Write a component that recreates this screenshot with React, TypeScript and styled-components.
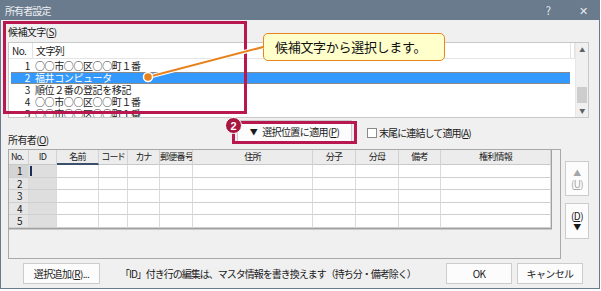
import styled, { createGlobalStyle } from 'styled-components';

const GlobalStyle = createGlobalStyle`
  html, body {
    margin: 0;
    padding: 0;
    background: #ffffff;
  }
  body {
    font-family: "Noto Sans CJK JP", "Noto Sans", sans-serif;
    font-size: 10px;
    letter-spacing: -0.6px;
    color: #1a1a1a;
  }
`;

const Window = styled.div`
  position: relative;
  width: 600px;
  height: 289px;
  box-sizing: border-box;
  background: #f0f0f0;
  border: 1px solid #6b7b8e;
  border-top: none;
  display: flex;
  flex-direction: column;
  overflow: hidden;
`;

const TitleBar = styled.div`
  height: 20px;
  margin: 0 -1px;
  background: #6b7b8e;
  color: #eef1f4;
  display: flex;
  align-items: center;
  padding: 0 0 0 5px;
  flex-shrink: 0;
`;

const Title = styled.span`
  flex: 1;
  font-size: 10px;
  letter-spacing: -0.9px;
`;

const TitleButton = styled.span<{ $w: number }>`
  width: ${(p) => p.$w}px;
  text-align: center;
  font-size: 11px;
  color: #e6eaee;
`;

const Body = styled.div`
  flex: 1;
  display: flex;
  flex-direction: column;
  padding: 0 10px 0 7px;
`;

const SectionLabel = styled.div`
  height: 14px;
  line-height: 14px;
  margin-top: 5px;
`;

const ListBox = styled.div`
  margin-top: 3px;
  height: 76px;
  box-sizing: border-box;
  border: 1px solid #c8c8c8;
  background: #ffffff;
  display: flex;
  overflow: hidden;
`;

const ListMain = styled.div`
  flex: 1;
  display: flex;
  flex-direction: column;
  overflow: hidden;
`;

const ListHeader = styled.div`
  height: 15px;
  flex-shrink: 0;
  display: grid;
  grid-template-columns: 24px 1fr 4px;
  border-bottom: 1px solid #e5e5e5;
  margin-bottom: 1px;
`;

const ListHeadCell = styled.div`
  line-height: 15px;
  padding-left: 3px;
  border-right: 1px solid #e3e3e3;
`;

const ListRow = styled.div<{ $selected?: boolean }>`
  height: 12px;
  flex-shrink: 0;
  display: grid;
  grid-template-columns: 24px 1fr;
  margin: 0 5px 0 2px;
  box-sizing: border-box;
  background: ${(p) => (p.$selected ? '#3399ff' : 'transparent')};
  color: ${(p) => (p.$selected ? '#ffffff' : '#1a1a1a')};
  border-top: 1px solid ${(p) => (p.$selected ? '#8a8a8a' : 'transparent')};
  border-bottom: 1px solid ${(p) => (p.$selected ? '#8a8a8a' : 'transparent')};
  align-items: center;
`;

const RowText = styled.span<{ $num?: boolean }>`
  display: block;
  height: 10px;
  line-height: 10px;
  white-space: nowrap;
  letter-spacing: -0.4px;
  text-align: ${(p) => (p.$num ? 'right' : 'left')};
  padding-right: ${(p) => (p.$num ? '5px' : '0')};
`;

const ScrollBar = styled.div`
  width: 12px;
  background: #f0f0f0;
  border-left: 1px solid #e8e8e8;
  display: flex;
  flex-direction: column;
  align-items: center;
`;

const ScrollArrow = styled.div`
  height: 13px;
  display: flex;
  align-items: center;
  justify-content: center;
  color: #606060;
  font-size: 6px;
`;

const ScrollTrack = styled.div`
  flex: 1;
  width: 100%;
  display: flex;
  flex-direction: column;
  justify-content: flex-end;
  padding-bottom: 1px;
`;

const ScrollThumb = styled.div`
  height: 16px;
  margin: 0 1px;
  background: #cdcdcd;
`;

const ControlRow = styled.div`
  margin-top: 2px;
  height: 27px;
  display: flex;
  align-items: flex-start;
`;

const OwnerLabel = styled.div`
  width: 229px;
  align-self: flex-end;
  line-height: 12px;
  margin-bottom: 1px;
`;

const PushButton = styled.button<{ $w: number; $h?: number; $disabled?: boolean; $row?: boolean }>`
  width: ${(p) => p.$w}px;
  height: ${(p) => p.$h ?? 21}px;
  box-sizing: border-box;
  background: #fcfcfc;
  border: 1px solid #cccccc;
  border-radius: 0;
  padding: 0;
  font-family: inherit;
  font-size: 10px;
  letter-spacing: -0.6px;
  color: ${(p) => (p.$disabled ? '#a6a6a6' : '#1a1a1a')};
  display: flex;
  flex-direction: ${(p) => (p.$row ? 'row' : 'column')};
  gap: ${(p) => (p.$row ? '5px' : '0')};
  align-items: center;
  justify-content: center;
  line-height: 12px;
`;

const CheckLabel = styled.label`
  margin: 7px 0 0 15px;
  display: flex;
  align-items: center;
  gap: 2px;
  line-height: 12px;
  letter-spacing: -0.9px;
`;

const CheckBox = styled.span`
  width: 8px;
  height: 8px;
  border: 1px solid #8a8a8a;
  background: #ffffff;
`;

const GridArea = styled.div`
  margin-top: 2px;
  display: flex;
  gap: 4px;
`;

const GridBox = styled.div`
  width: 557px;
  height: 110px;
  box-sizing: border-box;
  border: 1px solid #a9a9a9;
  background: #f0f0f0;
`;

const COLS = '20px 28px 42px 29px 32px 33px 120px 43px 43px 42px 110px';

const Table = styled.div`
  width: 542px;
  display: grid;
  grid-template-columns: ${COLS};
  grid-auto-rows: 12.6px;
  grid-template-rows: 15px;
  border-right: 1px solid #a0a0a0;
  border-bottom: 1px solid #a0a0a0;
  box-shadow: 0 1px 0 #c9c9c9;
`;

const HeadCell = styled.div<{ $active?: boolean; $left?: boolean }>`
  background: #ececec;
  border-right: 1px solid #d2d2d2;
  border-bottom: ${(p) => (p.$active ? '2px solid #3b4e6c' : '1px solid #c8c8c8')};
  box-sizing: border-box;
  text-align: ${(p) => (p.$left ? 'left' : 'center')};
  padding-left: ${(p) => (p.$left ? '2px' : '0')};
  font-size: 9px;
  font-feature-settings: "palt";
  letter-spacing: -0.7px;
  line-height: 14px;
  white-space: nowrap;
  overflow: hidden;
`;

const Cell = styled.div<{ $tone?: 'no' | 'noActive' | 'id' }>`
  position: relative;
  box-sizing: border-box;
  border-right: 1px solid #dadada;
  border-bottom: 1px solid #cfcfcf;
  background: ${(p) =>
    p.$tone === 'noActive' ? '#d4d4d4' : p.$tone === 'no' ? '#e6e6e6' : p.$tone === 'id' ? '#dedede' : '#ffffff'};
  padding-left: ${(p) => (p.$tone === 'no' || p.$tone === 'noActive' ? '8px' : '0')};
  line-height: 11px;
`;

const Caret = styled.span`
  position: absolute;
  left: 1px;
  top: 1px;
  bottom: 1px;
  width: 2px;
  background: #1c2d55;
`;

const SideColumn = styled.div`
  padding-top: 12px;
  display: flex;
  flex-direction: column;
  gap: 7px;
`;

const Arrow = styled.span`
  font-size: 8px;
  line-height: 10px;
`;

const BottomRow = styled.div`
  margin-top: 4px;
  display: flex;
  align-items: center;
  padding-left: 15px;
`;

const Notice = styled.div`
  margin-left: 20px;
  flex: 1;
  letter-spacing: -1px;
`;

const ButtonPair = styled.div`
  display: flex;
  gap: 5px;
  margin-right: 6px;
`;

/* annotations */

const Highlight = styled.div<{ $x: number; $y: number; $w: number; $h: number }>`
  position: absolute;
  left: ${(p) => p.$x - 1}px;
  top: ${(p) => p.$y}px;
  width: ${(p) => p.$w}px;
  height: ${(p) => p.$h}px;
  box-sizing: border-box;
  border: 3px solid #b8174f;
  pointer-events: none;
`;

const Callout = styled.div`
  position: absolute;
  left: 262px;
  top: 33px;
  width: 182px;
  height: 28px;
  box-sizing: border-box;
  background: #ffffcc;
  border: 1px solid #e6841f;
  border-radius: 5px;
  padding-left: 11px;
  font-size: 13px;
  letter-spacing: -0.3px;
  line-height: 26px;
  color: #111111;
`;

const Badge = styled.div`
  position: absolute;
  left: 224px;
  top: 117px;
  width: 17px;
  height: 17px;
  box-sizing: border-box;
  border-radius: 50%;
  background: #a8173f;
  border: 1px solid #ffffff;
  color: #ffffff;
  font-family: "Liberation Sans", Arial, sans-serif;
  font-weight: bold;
  font-size: 11px;
  letter-spacing: 0;
  display: flex;
  align-items: center;
  justify-content: center;
`;

const Overlay = styled.svg`
  position: absolute;
  left: -1px;
  top: 0;
  pointer-events: none;
`;

const candidates = [
  '○○市○○区○○町１番',
  '福井コンピュータ',
  '順位２番の登記を移記',
  '○○市○○区○○町１番',
  '○○市○○区○○町１番',
];

const headers = ['No.', 'ID', '名前', 'コード', 'カナ', '郵便番号', '住所', '分子', '分母', '備考', '権利情報'];

export default function App() {
  return (
    <>
      <GlobalStyle />
      <Window>
        <TitleBar>
          <Title>所有者設定</Title>
          <TitleButton $w={36}>?</TitleButton>
          <TitleButton $w={34}>✕</TitleButton>
        </TitleBar>
        <Body>
          <SectionLabel>
            候補文字(<u>S</u>)
          </SectionLabel>
          <ListBox>
            <ListMain>
              <ListHeader>
                <ListHeadCell>No.</ListHeadCell>
                <ListHeadCell>文字列</ListHeadCell>
                <ListHeadCell />
              </ListHeader>
              {candidates.map((text, i) => (
                <ListRow key={i} $selected={i === 1}>
                  <RowText $num>{i + 1}</RowText>
                  <RowText>{text}</RowText>
                </ListRow>
              ))}
            </ListMain>
            <ScrollBar>
              <ScrollArrow>▲</ScrollArrow>
              <ScrollTrack>
                <ScrollThumb />
              </ScrollTrack>
              <ScrollArrow>▼</ScrollArrow>
            </ScrollBar>
          </ListBox>

          <ControlRow>
            <OwnerLabel>
              所有者(<u>O</u>)
            </OwnerLabel>
            <PushButton $w={115} $h={23} $row>
              <Arrow>▼</Arrow>
              <span>
                選択位置に適用(<u>P</u>)
              </span>
            </PushButton>
            <CheckLabel>
              <CheckBox />
              <span>
                末尾に連結して適用(<u>A</u>)
              </span>
            </CheckLabel>
          </ControlRow>

          <GridArea>
            <GridBox>
              <Table>
                {headers.map((h, i) => (
                  <HeadCell key={h} $active={i === 2} $left={i === 0}>
                    {h}
                  </HeadCell>
                ))}
                {[1, 2, 3, 4, 5].map((n) =>
                  headers.map((h, i) => (
                    <Cell
                      key={`${n}-${h}`}
                      $tone={i === 0 ? (n === 1 ? 'noActive' : 'no') : i === 1 ? 'id' : undefined}
                    >
                      {i === 0 ? n : null}
                      {i === 1 && n === 1 ? <Caret /> : null}
                    </Cell>
                  )),
                )}
              </Table>
            </GridBox>
            <SideColumn>
              <PushButton $w={24} $h={35} $disabled>
                <Arrow>▲</Arrow>
                <span>
                  (<u>U</u>)
                </span>
              </PushButton>
              <PushButton $w={24} $h={36}>
                <span>
                  (<u>D</u>)
                </span>
                <Arrow>▼</Arrow>
              </PushButton>
            </SideColumn>
          </GridArea>

          <BottomRow>
            <PushButton $w={77}>
              <span>
                選択追加(<u>R</u>)...
              </span>
            </PushButton>
            <Notice>「ID」付き行の編集は、マスタ情報を書き換えます（持ち分・備考除く）</Notice>
            <ButtonPair>
              <PushButton $w={66}>OK</PushButton>
              <PushButton $w={66}>キャンセル</PushButton>
            </ButtonPair>
          </BottomRow>
        </Body>

        <Highlight $x={3} $y={21} $w={244} $h={93} />
        <Highlight $x={232} $y={121} $w={125} $h={23} />
        <Callout>候補文字から選択します。</Callout>
        <Overlay width={600} height={289} viewBox="0 0 600 289">
          <line x1={263} y1={47} x2={148} y2={77} stroke="#ffffff" strokeWidth={4} />
          <line x1={263} y1={47} x2={148} y2={77} stroke="#e8821c" strokeWidth={2} />
          <circle cx={148} cy={77} r={4.5} fill="#e8821c" stroke="#ffffff" strokeWidth={1.5} />
        </Overlay>
        <Badge>2</Badge>
      </Window>
    </>
  );
}
